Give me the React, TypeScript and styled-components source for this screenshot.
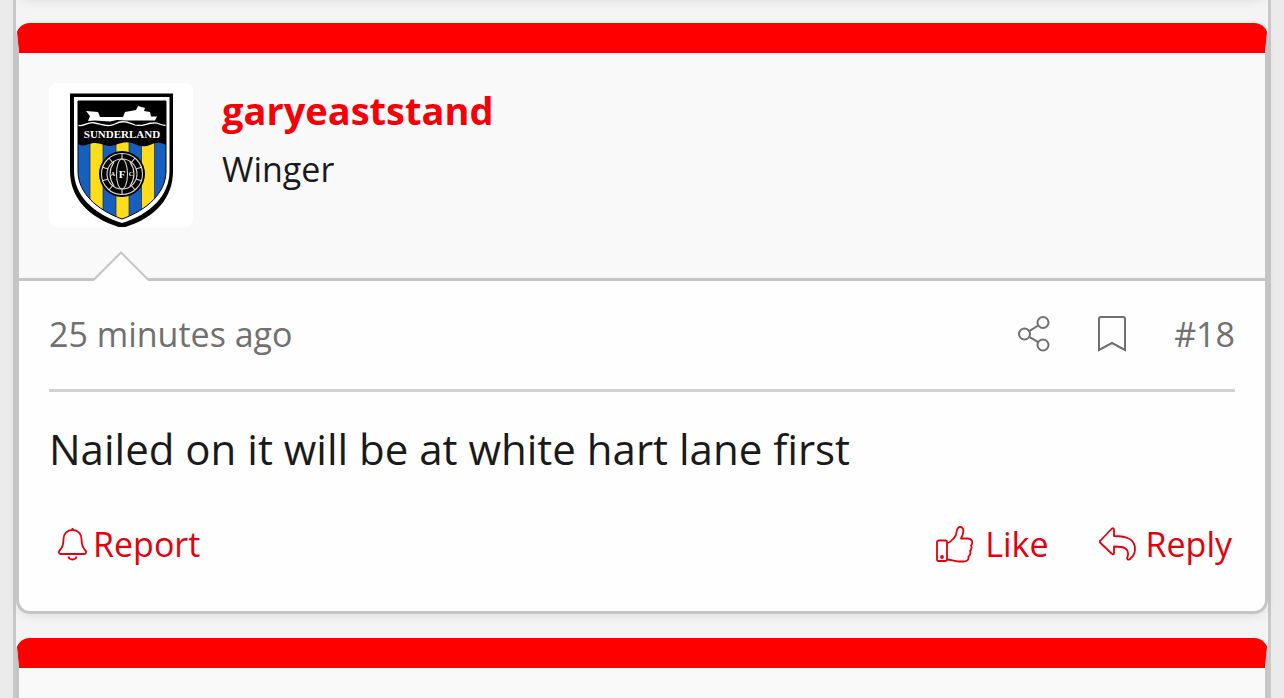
import React from "react";
import styled, { createGlobalStyle, css } from "styled-components";

const sans = `"Trebuchet MS", "Open Sans", "Noto Sans", sans-serif`;
const red = "#f50009";

const GlobalStyle = createGlobalStyle`
  *, *::before, *::after { box-sizing: border-box; }
  body { margin: 0; background: #ebebeb; color: #1a1a1a; font-family: ${sans}; }
  svg { display: block; flex: none; }
`;

const Thread = styled.main`
  display: flex;
  flex-direction: column;
  gap: 24px;
  margin: 0 13px;
  border: solid #c9c9c9;
  border-width: 0 3px;
  background: #f4f4f4;
`;

const shadow = css`
  box-shadow: 0 4px 12px -3px rgba(0, 0, 0, 0.1);
`;

const PreviousEdge = styled.div`
  height: 20px;
  margin-top: -21px;
  border-radius: 0 0 14px 14px;
  ${shadow}
`;

const Card = styled.article<{ $partial?: boolean }>`
  border: 3px solid #c5c5c5;
  border-top: 30px solid #ff0000;
  border-radius: 14px;
  background: #fefefe;
  ${shadow}
  ${(p) =>
    p.$partial &&
    css`
      border-bottom: 0;
      border-radius: 14px 14px 0 0;
      box-shadow: none;
    `}
`;

const UserHeader = styled.header`
  position: relative;
  display: flex;
  align-items: flex-start;
  gap: 29px;
  padding: 30px 30px 51px;
  border-bottom: 3px solid #c5c5c5;
  background: #f9f9f9;
`;

const HeaderStart = styled.div`
  min-height: 30px;
  background: #f9f9f9;
`;

const AvatarLink = styled.a`
  display: block;
  width: 144px;
  height: 144px;
  border-radius: 8px;
  overflow: hidden;
  background: #fff;
`;

const Pointer = styled.svg`
  position: absolute;
  left: 74px;
  bottom: -3px;
`;

const UserName = styled.h2`
  margin: 0;
  font-size: 38px;
  line-height: 54px;
  font-weight: 700;
`;

const UserLink = styled.a`
  color: ${red};
  text-decoration: none;
`;

const UserTitle = styled.p`
  margin: 5px 0 0;
  font-size: 34px;
  line-height: 54px;
`;

const Body = styled.div`
  padding: 0 30px;
`;

const Attribution = styled.div`
  display: flex;
  align-items: center;
  justify-content: space-between;
  min-height: 111px;
  padding-bottom: 2px;
  border-bottom: 3px solid #d2d2d2;
  color: #707070;
  font-size: 34px;
  line-height: 54px;
`;

const Tools = styled.div`
  display: flex;
  align-items: center;
  gap: 48px;
`;

const PlainLink = styled.a`
  color: inherit;
  text-decoration: none;
`;

const IconButton = styled.button`
  padding: 0;
  border: 0;
  background: none;
  color: inherit;
`;

const Message = styled.p`
  margin: 0;
  padding: 29px 0 31px;
  font-size: 42px;
  line-height: 56px;
`;

const Actions = styled.footer`
  display: flex;
  justify-content: space-between;
  padding: 9px 3px 40px 9px;
`;

const ActionGroup = styled.div`
  display: flex;
  gap: 50px;
`;

const Action = styled.button<{ $gap: number }>`
  display: flex;
  align-items: center;
  gap: ${(p) => p.$gap}px;
  padding: 0;
  border: 0;
  background: none;
  color: #e6000c;
  font: 34px/54px ${sans};
`;

const Crest = () => (
  <svg width="144" height="144" viewBox="0 0 144 144" role="img" aria-label="Sunderland crest">
    <defs>
      <clipPath id="shield">
        <path d="M29 18H117V88C117 110 98 127 73 136C48 127 29 110 29 88Z" />
      </clipPath>
    </defs>
    <path d="M21 10.5H124V88C124 116 105 136 73 145C41 136 21 116 21 88Z" fill="#000" />
    <path d="M25 14H120.500V88C120.500 112 102 131 73 140C44 131 25 112 25 88Z" fill="#fff" />
    <g clipPath="url(#shield)">
      <path d="M29 18H117V140H29Z" fill="#145fc0" />
      <path d="M41 55H54V140H41ZM67 55H80V140H67ZM92.500 55H105.500V140H92.500Z" fill="#fddb1d" stroke="#222" strokeWidth="0.700" />
      <path d="M29 18H117V62C111 59 107 59 101 62C94 65 88 62 83 60C77 58 71 60 66 62C58 65 54 60 46 60C38 60 36 65 29 61Z" fill="#000" />
      <path d="M29 42C34 45 38 38 46 40C55 42 60 44 66 41C73 37 79 39 86 42C93 44 98 40 104 40C110 39 113 44 118 42" fill="none" stroke="#fff" strokeWidth="1.300" />
    </g>
    <path d="M29 18H117V88C117 110 98 127 73 136C48 127 29 110 29 88Z" fill="none" stroke="#000" strokeWidth="1" />
    <path d="M37 28L49 29L51 34H74L76 29L87 27L89 23L96 25L95 28L101 29L102 33.500H108L106 37.500H77L68 37L61 38.500L46 37.500L39 38L41 33Z" fill="#fff" />
    <text x="73" y="55" textAnchor="middle" fill="#fff" fontFamily="Liberation Serif, serif" fontWeight="700" fontSize="11">SUNDERLAND</text>
    <circle cx="73" cy="91" r="23" fill="#000" />
    <g fill="none" stroke="#dcdcd2" strokeWidth="1.100">
      <circle cx="73" cy="91" r="20.500" />
      <circle cx="73" cy="91" r="15" />
      <ellipse cx="73" cy="91" rx="5.500" ry="15" />
      <path d="M65 79Q57 91 65 103M81 79Q89 91 81 103M53 84L59 86M53 98L59 96M87 86L93 84M87 96L93 98M60 75L64 80M82 80L86 75M60 107L64 102M82 102L86 107M73 70.500V76M73 106V111.500" />
    </g>
    <g fill="#fff" fontFamily="Liberation Serif, serif" fontWeight="700" textAnchor="middle">
      <text x="73" y="95" fontSize="11">F</text>
      <text x="64" y="93" fontSize="6">A</text>
      <text x="82" y="93" fontSize="6">C</text>
    </g>
  </svg>
);

const ShareIcon = () => (
  <svg width="32" height="36" viewBox="0 0 32 36" fill="none" stroke="currentColor" strokeWidth="2">
    <circle cx="6.500" cy="18" r="5.500" />
    <circle cx="25" cy="6.500" r="5.500" />
    <circle cx="25" cy="29" r="5.500" />
    <path d="M11.200 15.200L20.300 9.500M11.200 20.800L20.300 26.200" />
  </svg>
);

const BookmarkIcon = () => (
  <svg width="28" height="36" viewBox="0 0 28 36" fill="none" stroke="currentColor" strokeWidth="2">
    <path d="M1 34V3Q1 1 3 1H25Q27 1 27 3V34L14 27Z" />
  </svg>
);

const BellIcon = () => (
  <svg width="29" height="34" viewBox="0 0 29 34" fill="none" stroke="currentColor" strokeWidth="1.800" strokeLinejoin="round">
    <path d="M14.500 1V3C9 3 5.500 7 5.500 12C5.500 18 4.500 20.500 2 23C0 25 1 27 3 27H26C28 27 29 25 27 23C24.500 20.500 23.500 18 23.500 12C23.500 7 20 3 14.500 3" />
    <path d="M10.500 29.500C11 33.500 18 33.500 18.500 29.500" />
  </svg>
);

const ThumbIcon = () => (
  <svg width="37" height="37" viewBox="0 0 37 37" fill="none" stroke="currentColor" strokeWidth="1.800" strokeLinejoin="round">
    <path d="M3 14.500H9.500Q11 14.500 11 16V33.500Q11 35 9.500 35H2.500Q1 35 1 33.500V16.500Q1 14.500 3 14.500Z" />
    <path d="M11 17C14 17 16 14 18 12C21 9 20 7 21 4C22 1 23 1 24 1C27 1 28 4 27 7C27 10 25 11 25 12.500H31.500C36 12.500 37.500 16.500 35 19.500C36 21 35.500 24 34 25C35 27.500 34 29.500 32.500 30.500C33 34 31 35.500 27 35.500H23C18 35.500 15 33.500 11 33.500" />
    <circle cx="6" cy="31" r="1" fill="currentColor" />
  </svg>
);

const ReplyIcon = () => (
  <svg width="37" height="34" viewBox="0 0 37 34" fill="none" stroke="currentColor" strokeWidth="1.800" strokeLinejoin="round">
    <path d="M1.500 13.500L12.500 2Q15 0 15 3V9C28 9 36 12 36 22C36 26 33.500 30 31 32C29 33.500 27.500 32 28.500 30C31 22 26 19.500 15 19.500V26Q15 28.500 12.500 26.500L1.500 16Q0 14.800 1.500 13.500Z" />
  </svg>
);

export default function App() {
  return (
    <>
      <GlobalStyle />
      <Thread>
        <PreviousEdge />
        <Card>
          <UserHeader>
            <AvatarLink href="#member"><Crest /></AvatarLink>
            <div>
              <UserName><UserLink href="#member">garyeaststand</UserLink></UserName>
              <UserTitle>Winger</UserTitle>
            </div>
            <Pointer width="56" height="30" viewBox="0 0 56 30">
              <path d="M0 30L28 1L56 30Z" fill="#fefefe" />
              <path d="M0 29.500L28 1.500L56 29.500" fill="none" stroke="#c5c5c5" strokeWidth="2" />
            </Pointer>
          </UserHeader>
          <Body>
            <Attribution>
              <PlainLink href="#post-18"><time>25 minutes ago</time></PlainLink>
              <Tools>
                <IconButton aria-label="Share"><ShareIcon /></IconButton>
                <IconButton aria-label="Add bookmark"><BookmarkIcon /></IconButton>
                <PlainLink href="#post-18">#18</PlainLink>
              </Tools>
            </Attribution>
            <Message>Nailed on it will be at white hart lane first</Message>
            <Actions>
              <Action $gap={6}><BellIcon />Report</Action>
              <ActionGroup>
                <Action $gap={12}><ThumbIcon />Like</Action>
                <Action $gap={10}><ReplyIcon />Reply</Action>
              </ActionGroup>
            </Actions>
          </Body>
        </Card>
        <Card $partial>
          <HeaderStart />
        </Card>
      </Thread>
    </>
  );
}
